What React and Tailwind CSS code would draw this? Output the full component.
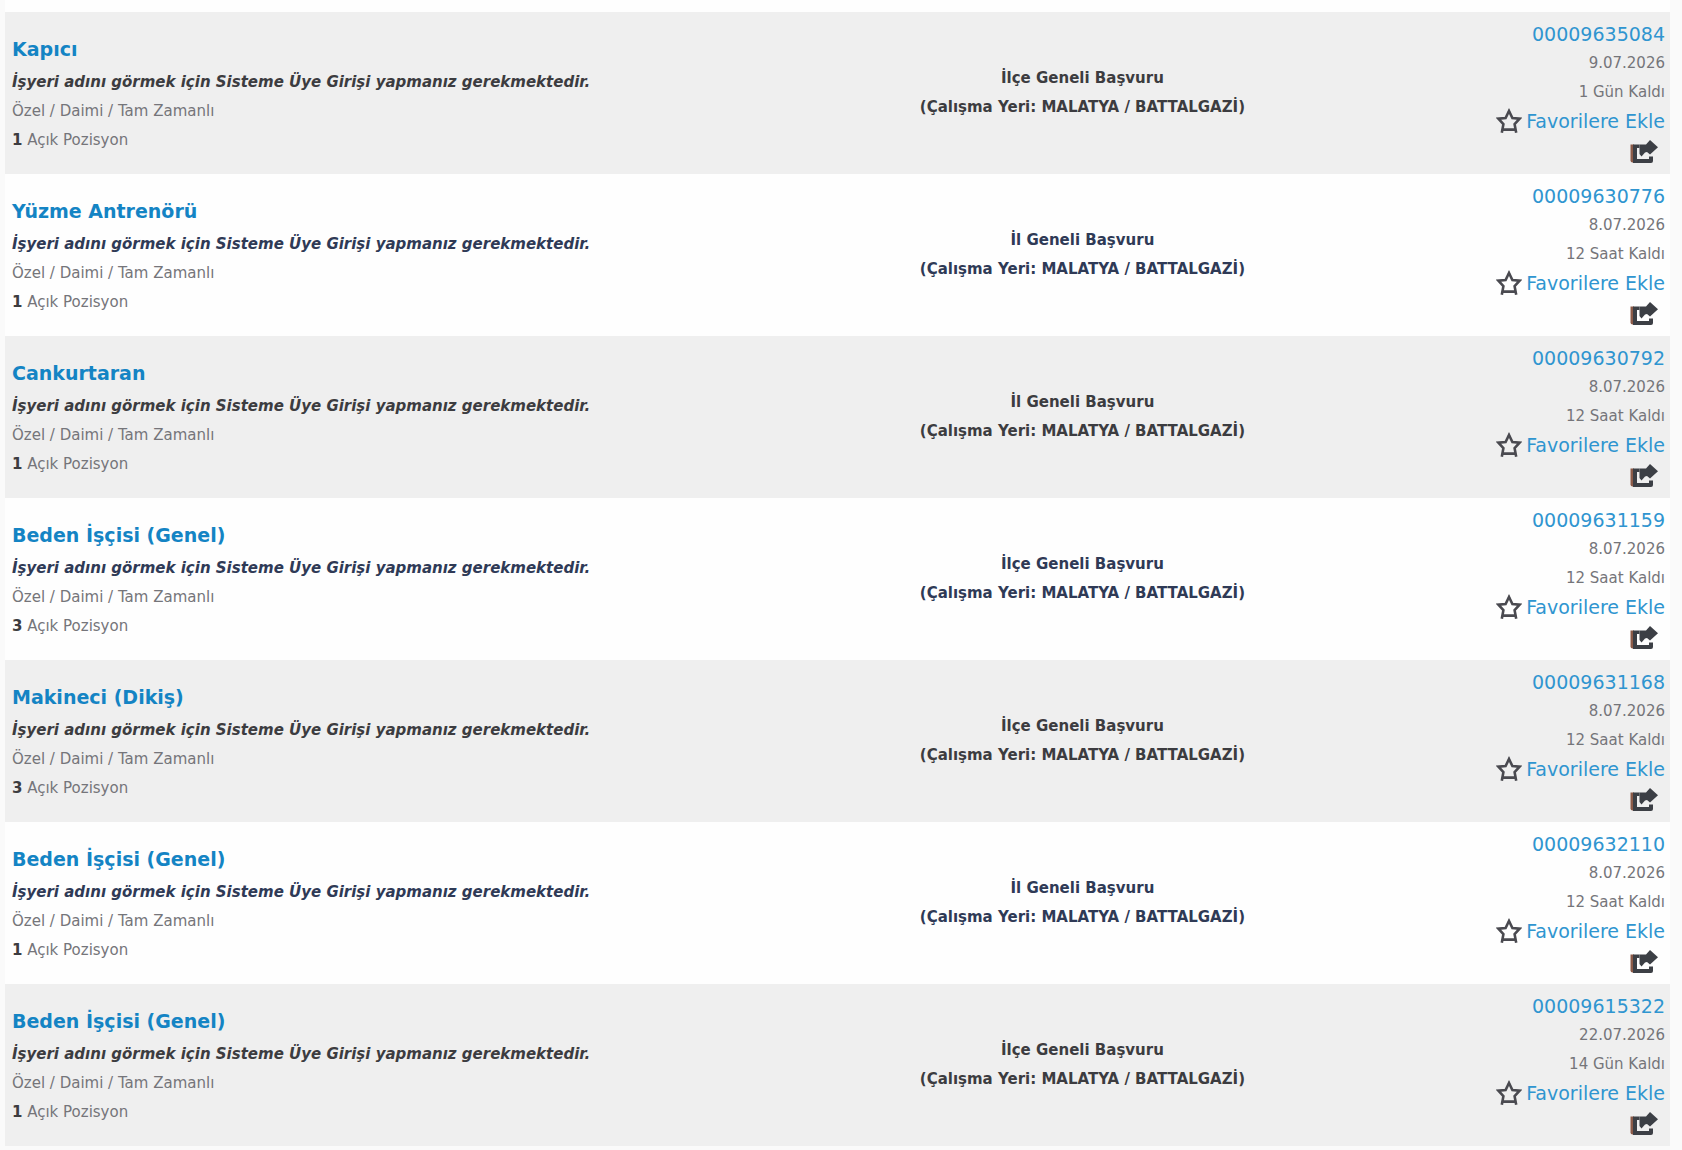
const SITE_NOTE = 'İşyeri adını görmek için Sisteme Üye Girişi yapmanız gerekmektedir.';

const jobs = [
  { id: '00009635084', title: 'Kapıcı', count: 1, scope: 'İlçe Geneli Başvuru', date: '9.07.2026', left: '1 Gün Kaldı' },
  { id: '00009630776', title: 'Yüzme Antrenörü', count: 1, scope: 'İl Geneli Başvuru', date: '8.07.2026', left: '12 Saat Kaldı' },
  { id: '00009630792', title: 'Cankurtaran', count: 1, scope: 'İl Geneli Başvuru', date: '8.07.2026', left: '12 Saat Kaldı' },
  { id: '00009631159', title: 'Beden İşçisi (Genel)', count: 3, scope: 'İlçe Geneli Başvuru', date: '8.07.2026', left: '12 Saat Kaldı' },
  { id: '00009631168', title: 'Makineci (Dikiş)', count: 3, scope: 'İlçe Geneli Başvuru', date: '8.07.2026', left: '12 Saat Kaldı' },
  { id: '00009632110', title: 'Beden İşçisi (Genel)', count: 1, scope: 'İl Geneli Başvuru', date: '8.07.2026', left: '12 Saat Kaldı' },
  { id: '00009615322', title: 'Beden İşçisi (Genel)', count: 1, scope: 'İlçe Geneli Başvuru', date: '22.07.2026', left: '14 Gün Kaldı' },
];

function StarIcon() {
  return (
    <svg className="w-[26px] h-[26px] shrink-0" viewBox="0 0 26 26" fill="none" stroke="#4a4a50" strokeWidth="2.6" aria-hidden="true">
      <path d="M5.800 24.800l1.600-8.600L2.400 10.700l7.200-.6L13 3l3.400 7.100 7.200.6-5 5.500 1.600 8.600M7 21.600h12" />
      <path d="M11 5.500L13 1l2 4.500z" fill="#4a4a50" stroke="none" />
    </svg>
  );
}

function ShareIcon() {
  return (
    <svg className="w-[29px] h-[26px]" viewBox="0 0 29 26" aria-hidden="true">
      <path d="M1.500 5.500H5V23.500H3.500Q1.500 23.500 1.500 21.500z" fill="#8b5a48" />
      <path d="M4 5.500h6.500V9H8v11h12v-2.500h4V22q0 2-2 2H4z" fill="#3c3f45" />
      <path d="M10.500 5.500H17L21 1l8 7.200-8 7.300-3-2.500-2 .5-3.500 4-2-2.500z" fill="#3c3f45" />
    </svg>
  );
}

export default function App() {
  return (
    <main className="min-h-screen bg-[#fafafa] pl-[5px] pr-3 font-['DejaVu_Sans',Verdana,sans-serif]">
      <div className="bg-[#fefefe] pt-3">
        <table className="w-full table-fixed border-collapse text-[15px] leading-[29px]">
          <colgroup>
            <col className="w-1/2" />
            <col className="w-[29%]" />
            <col className="w-[21%]" />
          </colgroup>
          <tbody>
            {jobs.map((job) => (
              <tr key={job.id} className="h-[162px] odd:bg-[#efefef] text-[#2f3a56] odd:text-[#3c3c40]">
                <td className="px-[7px] align-middle">
                  <h2 className="text-[19px] leading-[37px] font-bold">
                    <a href="#" className="text-[#1484c4]">{job.title}</a>
                  </h2>
                  <p className="font-bold italic">{SITE_NOTE}</p>
                  <p className="text-[#75757a]">Özel / Daimi / Tam Zamanlı</p>
                  <p className="text-[#75757a]"><b className="text-[#3c3c40]">{job.count}</b> Açık Pozisyon</p>
                </td>
                <td className="pl-[14px] pr-[7px] align-middle text-center font-bold">
                  <p>{job.scope}</p>
                  <p>(Çalışma Yeri: MALATYA / BATTALGAZİ)</p>
                </td>
                <td className="px-[5px] align-middle text-right text-[#75757a]">
                  <p className="text-[19px] leading-[30px]"><a href="#" className="text-[#2f95d0]">{job.id}</a></p>
                  <p>{job.date}</p>
                  <p>{job.left}</p>
                  <div className="flex justify-end">
                    <button className="flex items-center gap-1 text-[19px] text-[#2f95d0]">
                      <StarIcon />
                      Favorilere Ekle
                    </button>
                  </div>
                  <div className="flex h-8 items-center justify-end pr-[7px]">
                    <button aria-label="Paylaş"><ShareIcon /></button>
                  </div>
                </td>
              </tr>
            ))}
          </tbody>
        </table>
      </div>
    </main>
  );
}
